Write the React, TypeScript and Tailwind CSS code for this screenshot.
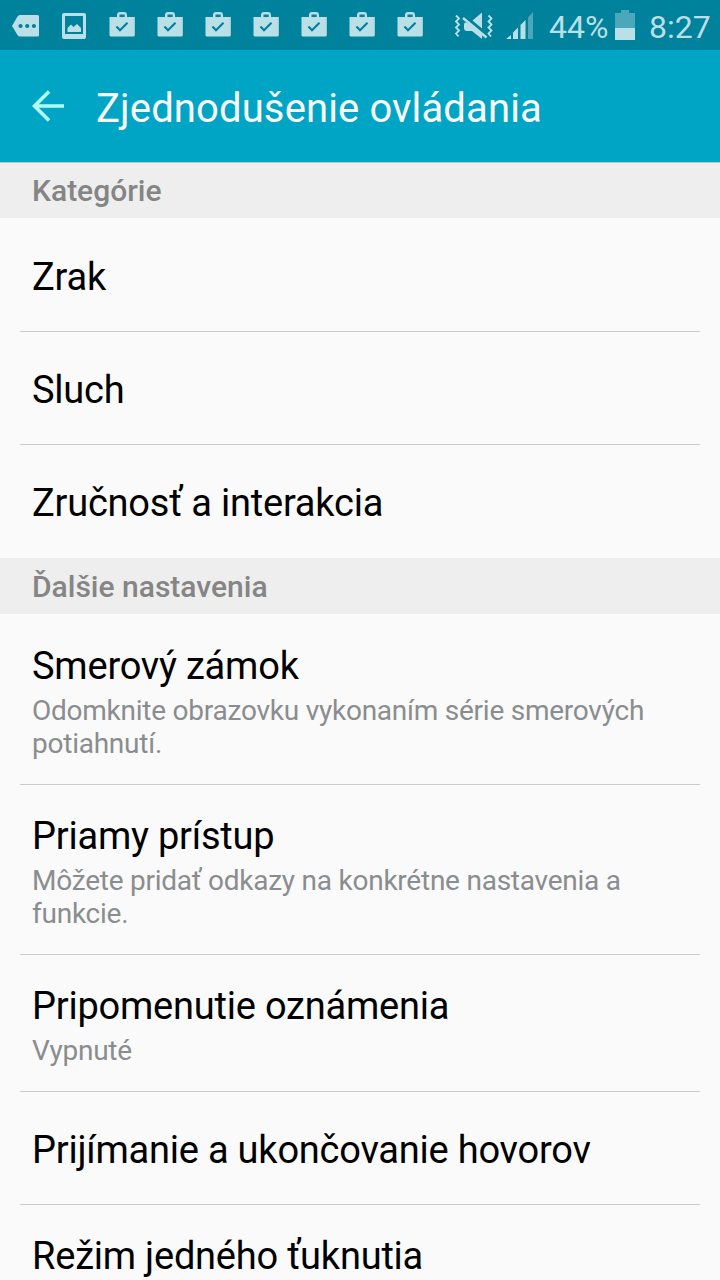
import type { ReactNode } from 'react';

interface SettingItem {
  title: string;
  summary?: string[];
}

const CATEGORIES: SettingItem[] = [
  { title: 'Zrak' },
  { title: 'Sluch' },
  { title: 'Zručnosť a interakcia' },
];

const MORE_SETTINGS: SettingItem[] = [
  { title: 'Smerový zámok', summary: ['Odomknite obrazovku vykonaním série smerových', 'potiahnutí.'] },
  { title: 'Priamy prístup', summary: ['Môžete pridať odkazy na konkrétne nastavenia a', 'funkcie.'] },
  { title: 'Pripomenutie oznámenia', summary: ['Vypnuté'] },
  { title: 'Prijímanie a ukončovanie hovorov' },
  { title: 'Režim jedného ťuknutia', summary: [] },
];

export default function App() {
  return (
    <div className="flex flex-col w-[720px] h-[1280px] overflow-hidden bg-[#fafafa] font-['Roboto',sans-serif]">
      <StatusBar />
      <header className="flex items-center h-28 shrink-0 pl-8 bg-[#00a5c6]">
        <svg className="w-8 h-8 shrink-0" viewBox="0 0 32 32" fill="none" stroke="#b2fff6" strokeWidth="3.6">
          <path d="M32 16H3M17 1.5L2.5 16L17 30.5" />
        </svg>
        <h1 className="ml-8 pt-1.5 text-[40px] leading-[48px] tracking-[0.13px] text-[#fafafa]">Zjednodušenie ovládania</h1>
      </header>
      <main className="flex flex-col">
        <Section title="Kategórie" items={CATEGORIES} shadow />
        <Section title="Ďalšie nastavenia" items={MORE_SETTINGS} />
      </main>
    </div>
  );
}

function StatusBar() {
  return (
    <div className="flex items-center h-[50px] shrink-0 pl-0.5 bg-[#00829c] text-[#bbdfe6]">
      <StatusIcon>
        <path fillRule="evenodd" d="M10 26L15.5 16.5Q16.500 15 18 15H35.500Q37 15 37 16.500V35Q37 36.500 35.500 36.500H18Q16.500 36.500 15.500 35ZM18.500 23.900a2.100 2.100 0 1 0 .01 0ZM25.200 23.900a2.100 2.100 0 1 0 .01 0ZM31.900 23.900a2.100 2.100 0 1 0 .01 0Z" />
      </StatusIcon>
      <StatusIcon>
        <path fillRule="evenodd" d="M14 13H34Q36 13 36 15V37Q36 39 34 39H14Q12 39 12 37V15Q12 13 14 13ZM15 16V34H33V16Z" />
        <path d="M17.500 32V28L21 24.500L23.500 27L27 24L31 28V32Z" />
      </StatusIcon>
      {Array.from({ length: 7 }, (_, i) => (
        <StatusIcon key={i}>
          <path fillRule="evenodd" d="M11.500 17H19V15Q19 12 22 12H26Q29 12 29 15V17H36.800V35Q36.800 36.500 35.300 36.500H13Q11.500 36.500 11.500 35ZM21.500 17H26.700V14.500H21.500Z" />
          <path d="M18.500 26.500L22 30.200L29.500 22.700" fill="none" stroke="#00829c" strokeWidth="2.2" />
        </StatusIcon>
      ))}
      <svg className="ml-5 w-10 h-[50px]" viewBox="454 0 40 50" fill="none" stroke="currentColor">
        <path d="M456 15.500L459 18.500L456 21.500L459 24.500L456 27.500L459 30.500L456 33.500L458.500 36.500M488.500 15.500L491.500 18.500L488.500 21.500L491.500 24.500L488.500 27.500L491.500 30.500L488.500 33.500L491 36.500" strokeWidth="1.8" />
        <path d="M472.500 20.500L482 12.500V28.500ZM464 24.500Q464 22 466.500 22.500L482 34V39L472 31H467Q464 31 464 28Z" fill="currentColor" stroke="none" />
        <path d="M463 18L486.500 37.500" strokeWidth="2.4" />
      </svg>
      <svg className="ml-3 w-[28px] h-[50px]" viewBox="506 0 28 50" fill="currentColor">
        <path d="M506 39L511 35V39ZM513 39V32.500L518 27.500V39ZM520.500 39V25L525.500 20V39Z" />
        <path d="M528 39V17.500L533 12V39Z" opacity=".4" />
      </svg>
      <span className="ml-[15px] w-[66px] text-[32px] leading-[38px] pt-1">44%</span>
      <svg className="w-5 h-[50px] shrink-0" viewBox="0 0 20 50" fill="currentColor">
        <path d="M0 28V13H6V10H14V13H20V28Z" opacity=".4" />
        <path d="M0 28H20V40H0Z" />
      </svg>
      <span className="ml-3.5 text-[32px] leading-[38px] pt-1">8:27</span>
    </div>
  );
}

function StatusIcon({ children }: { children: ReactNode }) {
  return (
    <svg className="w-12 h-[50px] shrink-0" viewBox="0 0 48 50" fill="currentColor">
      {children}
    </svg>
  );
}

function Section({ title, items, shadow }: { title: string; items: SettingItem[]; shadow?: boolean }) {
  return (
    <section>
      <h2
        className={`h-14 mb-px pl-8 bg-[#eeeeee] text-[30px] font-medium text-[#858585] ${
          shadow ? 'border-t border-[#bfc4c5] leading-[56px]' : 'leading-[58px]'
        }`}
      >
        {title}
      </h2>
      <ul className="mx-5 divide-y divide-[#cccccc]">
        {items.map(item => (
          <SettingRow key={item.title} item={item} />
        ))}
      </ul>
    </section>
  );
}

function SettingRow({ item }: { item: SettingItem }) {
  if (!item.summary) {
    return (
      <li className="h-[113px] px-3 text-[38px] leading-[117px] tracking-[-0.22px] whitespace-nowrap text-black">
        {item.title}
      </li>
    );
  }
  return (
    <li className="px-3 pt-[27px] pb-6 whitespace-nowrap">
      <div className="mb-1 text-[38px] leading-[48px] tracking-[-0.22px] text-black">{item.title}</div>
      <div className="text-[28px] leading-[33px] tracking-[-0.24px] text-[#8a8d8f]">
        {item.summary.map(line => (
          <div key={line}>{line}</div>
        ))}
      </div>
    </li>
  );
}
